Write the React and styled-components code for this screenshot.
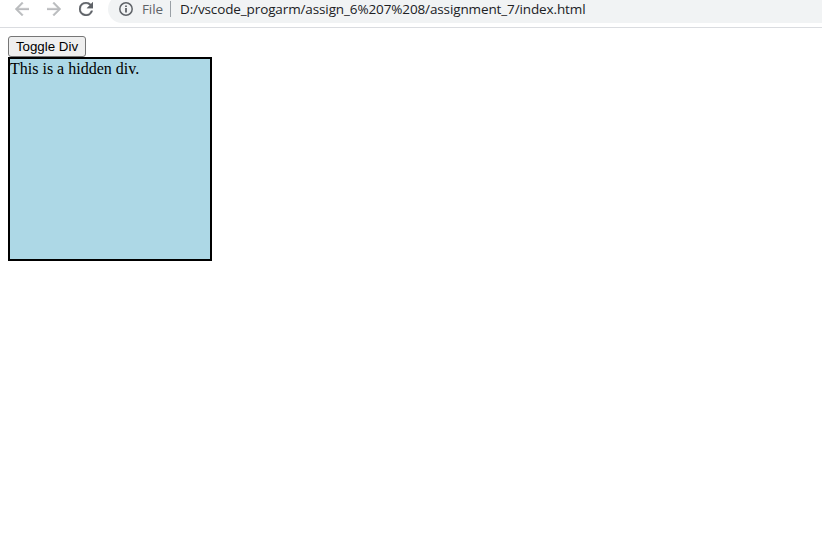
import React, { useState } from "react";
import styled, { createGlobalStyle } from "styled-components";

const GlobalStyle = createGlobalStyle`
  body { margin: 0; background: #fff; }
`;

const Toolbar = styled.header`
  box-sizing: border-box;
  display: flex;
  align-items: flex-start;
  height: 28px;
  overflow: hidden;
  border-bottom: 1px solid #dadce0;
`;

const NavButtons = styled.nav`
  display: flex;
  gap: 18px;
  padding-left: 15px;
  width: 93px;
`;

const NavIcon = styled.svg`
  width: 14px;
  height: 14px;
  margin-top: 2px;
  flex: none;
  fill: ${(p) => (p.$active ? "#5f6368" : "#babcbe")};
  stroke: ${(p) => (p.$active ? "#5f6368" : "#babcbe")};
  stroke-width: 0.4;
`;

const AddressBar = styled.div`
  box-sizing: border-box;
  flex: 1;
  display: flex;
  align-items: center;
  height: 28px;
  margin-top: -5px;
  padding-left: 11px;
  border-radius: 14px 0 0 14px;
  background: #f1f3f4;
  font: 13.5px/18px "Open Sans", "Segoe UI", sans-serif;
  letter-spacing: -0.12px;
  color: #202124;
  white-space: nowrap;
`;

const InfoIcon = styled.svg`
  width: 14px;
  height: 14px;
  flex: none;
`;

const Scheme = styled.span`
  width: 28px;
  margin-left: 9px;
  color: #5f6368;
`;

const Divider = styled.span`
  width: 1px;
  height: 16px;
  margin-right: 9px;
  background: #9aa0a6;
`;

const Address = styled.span`
  flex: none;
`;

const Page = styled.main`
  display: flex;
  flex-direction: column;
  align-items: flex-start;
  padding: 8px;
`;

const ToggleButton = styled.button`
  box-sizing: border-box;
  width: 78px;
  height: 21px;
  padding: 0;
  border: 1px solid #767676;
  border-radius: 3px;
  background: #efefef;
  color: #000;
  font: 13.333px/17px "Liberation Sans", Arial, sans-serif;
  white-space: nowrap;
`;

const Panel = styled.div`
  width: 200px;
  height: 200px;
  border: 2px solid #000;
  background: lightblue;
  font: 16px/20px "Liberation Serif", "Times New Roman", serif;
  color: #000;
`;

export default function App() {
  const [open, setOpen] = useState(true);
  return (
    <>
      <GlobalStyle />
      <Toolbar>
        <NavButtons>
          <NavIcon viewBox="4 4 16 16">
            <path d="M20 11H7.83l5.59-5.59L12 4l-8 8 8 8 1.41-1.41L7.83 13H20z" />
          </NavIcon>
          <NavIcon viewBox="4 4 16 16">
            <path d="M12 4l-1.41 1.41L16.17 11H4v2h12.17l-5.58 5.59L12 20l8-8z" />
          </NavIcon>
          <NavIcon $active viewBox="4 4 16 16">
            <path d="M17.65 6.35A7.96 7.96 0 0 0 12 4a8 8 0 1 0 7.73 10h-2.08A6 6 0 1 1 12 6c1.66 0 3.14.69 4.22 1.78L13 11h7V4z" />
          </NavIcon>
        </NavButtons>
        <AddressBar>
          <InfoIcon viewBox="0 0 14 14">
            <circle cx="7" cy="7" r="6.2" fill="none" stroke="#5f6368" strokeWidth="1.5" />
            <path d="M6.1 6.1h1.8v4.4H6.1zM6.1 3.4h1.8V5H6.1z" fill="#5f6368" />
          </InfoIcon>
          <Scheme>File</Scheme>
          <Divider />
          <Address>D:/vscode_progarm/assign_6%207%208/assignment_7/index.html</Address>
        </AddressBar>
      </Toolbar>
      <Page>
        <ToggleButton onClick={() => setOpen(!open)}>Toggle Div</ToggleButton>
        {open && <Panel>This is a hidden div.</Panel>}
      </Page>
    </>
  );
}
